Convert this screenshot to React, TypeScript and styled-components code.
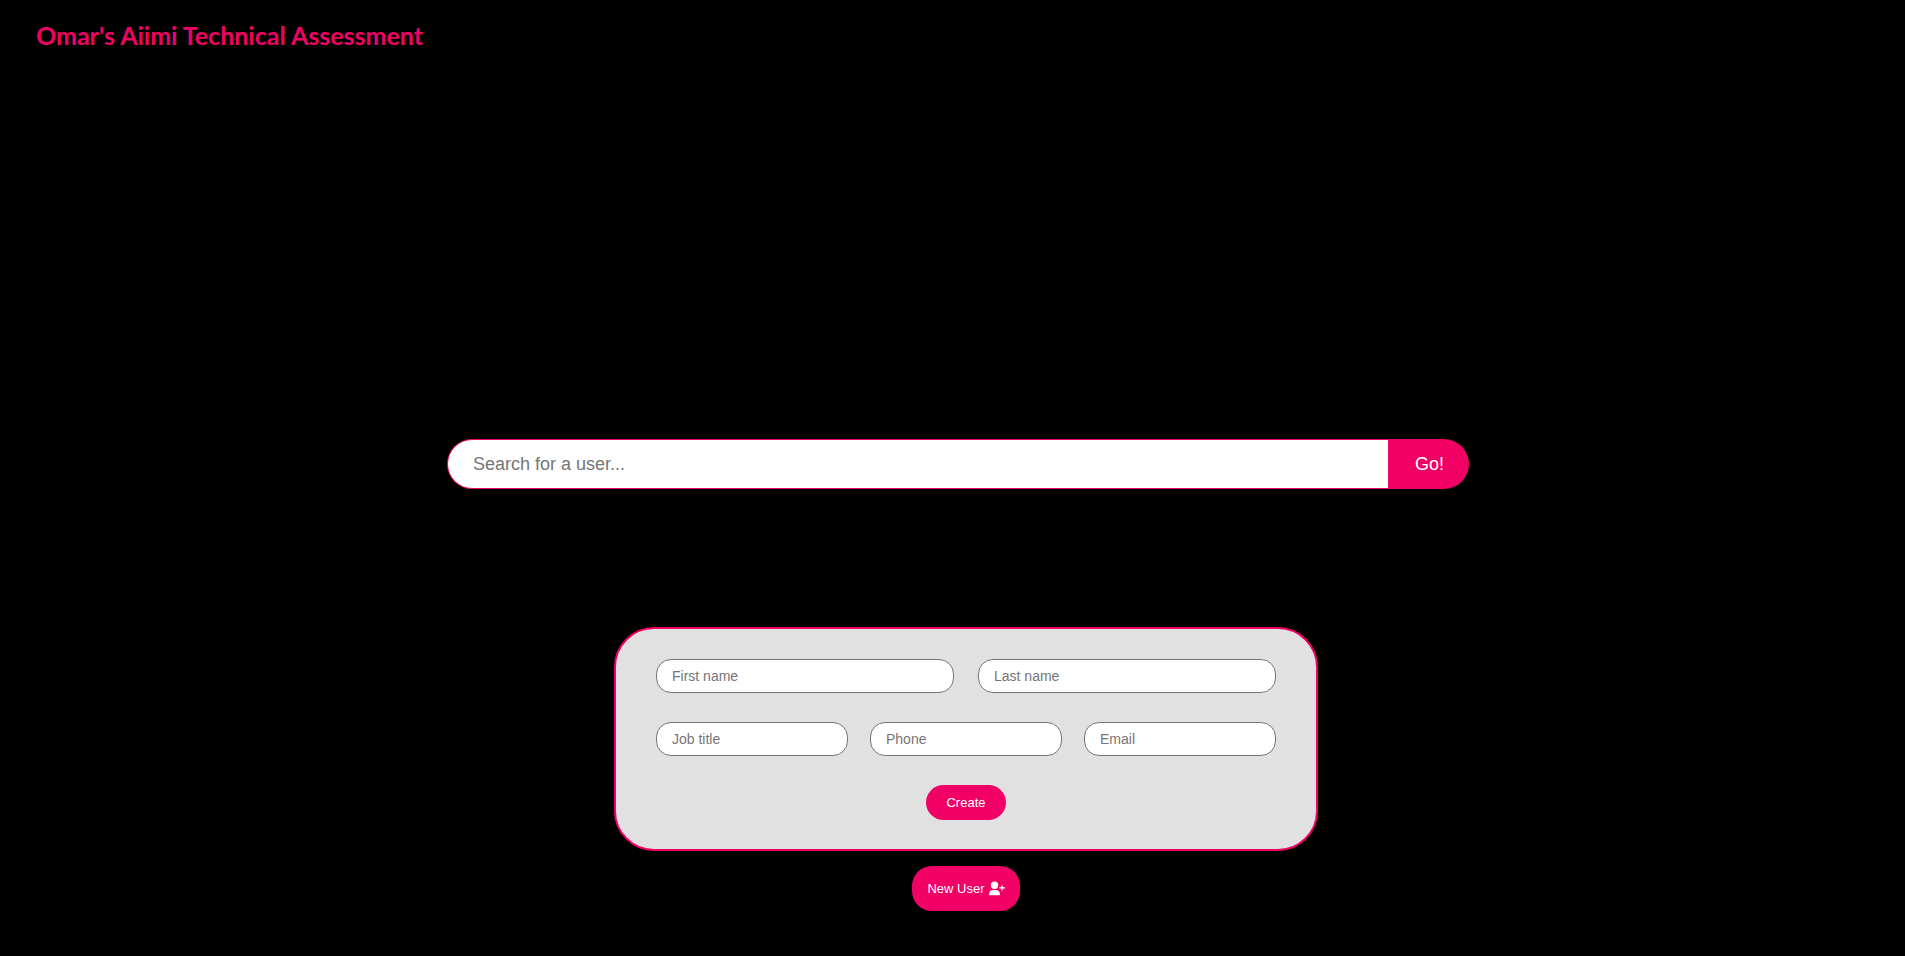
import React from "react";
import styled, { createGlobalStyle } from "styled-components";

const PINK = "#f10065";

const GlobalStyle = createGlobalStyle`
  * { box-sizing: border-box; }
  body {
    margin: 0;
    background: #000;
    font-family: "Liberation Sans", Arial, sans-serif;
  }
`;

const Page = styled.div`
  display: flex;
  flex-direction: column;
  min-height: 100vh;
`;

const Header = styled.header`
  padding: 19px 36px 20px;
`;

const Title = styled.h1`
  margin: 0;
  color: ${PINK};
  font-family: "Trebuchet MS", Lato, sans-serif;
  font-size: 25px;
  font-weight: 700;
  line-height: 32px;
`;

const Main = styled.main`
  flex: 1;
  display: flex;
  flex-direction: column;
  align-items: center;
  padding: 368px 0 45px;
`;

const SearchForm = styled.form`
  display: flex;
  width: 1022px;
  max-width: 90%;
  height: 50px;
  margin-left: 11px;
`;

const SearchInput = styled.input`
  flex: 1;
  min-width: 0;
  padding: 0 25px;
  border: 1px solid ${PINK};
  border-right: 0;
  border-radius: 25px 0 0 25px;
  background: #fff;
  font-family: inherit;
  font-size: 18px;
  outline: none;
  &::placeholder { color: #757575; }
`;

const Button = styled.button`
  border: 0;
  background: ${PINK};
  color: #fff;
  font-family: inherit;
  font-size: 13px;
  cursor: pointer;
`;

const SearchButton = styled(Button)`
  width: 81px;
  padding: 0 24px 0 26px;
  border-radius: 0 25px 25px 0;
  font-size: 18px;
`;

const UserSection = styled.section`
  display: flex;
  flex-direction: column;
  align-items: center;
  gap: 15px;
  width: 704px;
  max-width: 90%;
  margin: 138px 0 0 27px;
`;

const UserForm = styled.form`
  display: flex;
  flex-direction: column;
  align-items: center;
  gap: 29px;
  width: 100%;
  padding: 30px 40px 29px;
  border: 2px solid ${PINK};
  border-radius: 40px;
  background: #e1e1e1;
`;

const Row = styled.div<{ $gap: number }>`
  display: flex;
  gap: ${(p) => p.$gap}px;
  width: 100%;
`;

const Field = styled.input`
  flex: 1;
  min-width: 0;
  height: 34px;
  padding: 0 15px;
  border: 1px solid #757575;
  border-radius: 15px;
  background: #fff;
  font-family: inherit;
  font-size: 14px;
  outline: none;
  &::placeholder { color: #757575; }
`;

const CreateButton = styled(Button)`
  width: 80px;
  height: 35px;
  border-radius: 18px;
`;

const NewUserButton = styled(Button)`
  display: flex;
  align-items: center;
  justify-content: center;
  gap: 4px;
  width: 108px;
  height: 45px;
  padding: 0;
  border-radius: 20px;
  white-space: nowrap;
`;

const UserPlus = () => (
  <svg width="16" height="16" viewBox="0 0 16 16" fill="currentColor" aria-hidden="true">
    <circle cx="5.5" cy="4.2" r="3.7" />
    <path d="M0 13.3C0 10.3 2 8.9 4.4 8.9h2.2c2.4 0 4.4 1.4 4.4 4.4 0 .6-.4 1-1 1H1c-.6 0-1-.4-1-1z" />
    <path d="M12.4 4.2h1.2v2.1H16v1.2h-2.4v2.1h-1.2V7.5h-2.1V6.3h2.1z" />
  </svg>
);

export default function App() {
  return (
    <Page>
      <GlobalStyle />
      <Header>
        <Title>Omar's Aiimi Technical Assessment</Title>
      </Header>
      <Main>
        <SearchForm role="search" onSubmit={(e) => e.preventDefault()}>
          <SearchInput type="text" aria-label="Search for a user" placeholder="Search for a user..." />
          <SearchButton type="submit">Go!</SearchButton>
        </SearchForm>
        <UserSection>
          <UserForm onSubmit={(e) => e.preventDefault()}>
            <Row $gap={24}>
              <Field type="text" aria-label="First name" placeholder="First name" />
              <Field type="text" aria-label="Last name" placeholder="Last name" />
            </Row>
            <Row $gap={22}>
              <Field type="text" aria-label="Job title" placeholder="Job title" />
              <Field type="tel" aria-label="Phone" placeholder="Phone" />
              <Field type="email" aria-label="Email" placeholder="Email" />
            </Row>
            <CreateButton type="submit">Create</CreateButton>
          </UserForm>
          <NewUserButton type="button">
            New User
            <UserPlus />
          </NewUserButton>
        </UserSection>
      </Main>
    </Page>
  );
}
